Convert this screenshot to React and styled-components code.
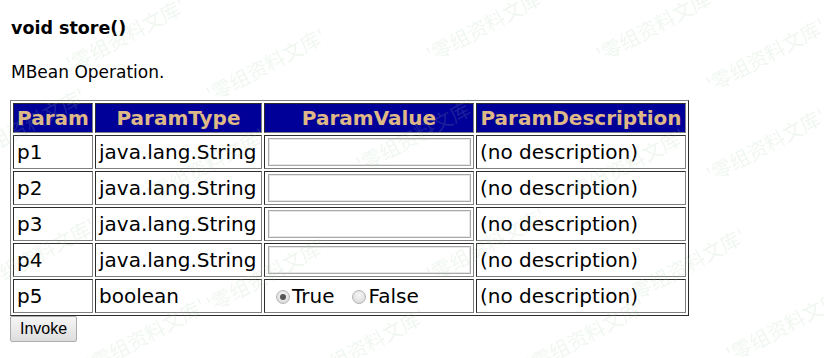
import React from 'react';
import styled, { createGlobalStyle } from 'styled-components';

const GlobalStyle = createGlobalStyle`
  html, body {
    background: #ffffff;
  }
  body {
    margin: 10px;
    font-family: "DejaVu Sans", Verdana, sans-serif;
    color: #000;
  }
`;

const Title = styled.div`
  font-size: 17.5px;
  font-weight: bold;
  line-height: 20px;
  margin: 8px 0 0 1px;
`;

const Lead = styled.p`
  font-size: 17px;
  line-height: 20px;
  margin: 24px 0 18px 1px;
`;

const Table = styled.table`
  border: 1px outset #808080;
  border-spacing: 2px;
  font-size: 20px;
`;

const Head = styled.th`
  background: #000099;
  color: #deb887;
  font-weight: bold;
  padding: 2px;
  border: 1px inset #808080;
  white-space: nowrap;
  width: ${p => p.w}px;
`;

const Cell = styled.td`
  padding: 2px 3px;
  border: 1px inset #808080;
  white-space: nowrap;
  height: 28px;
`;

const InputCell = styled(Cell)`
  padding: 2px 2px 2px 3px;
`;

const TextInput = styled.input`
  box-sizing: border-box;
  width: 203px;
  height: 28px;
  margin: 0;
  padding: 1px 2px;
  border: 1px solid #a9a9a9;
  box-shadow: inset 0 0 0 1px #e6e6e6;
  font: 20px "DejaVu Sans", Verdana, sans-serif;
  display: block;
`;

const Choice = styled.label`
  display: inline-flex;
  align-items: center;
  margin-right: 10px;
`;

const Radio = styled.input`
  appearance: none;
  width: 14px;
  height: 14px;
  margin: 2px 2px 0 8px;
  border-radius: 50%;
  border: 1px solid #b4b4b4;
  background: radial-gradient(circle at 50% 35%, #f6f6f6, #d4d4d4);
  position: relative;

  &:checked::after {
    content: '';
    position: absolute;
    left: 3px;
    top: 3px;
    width: 6px;
    height: 6px;
    border-radius: 50%;
    background: #555;
  }
`;

const Button = styled.button`
  margin: 0;
  padding: 2px 9px;
  height: 26px;
  font: 16px "Liberation Sans", Arial, sans-serif;
  color: #000;
  background: linear-gradient(#f6f6f6, #dddddd);
  border: 1px solid #acacac;
  border-radius: 2px;
`;

const Overlay = styled.div`
  position: fixed;
  inset: 0;
  overflow: hidden;
  pointer-events: none;
`;

const Watermark = styled.span`
  position: absolute;
  left: ${p => p.x}px;
  top: ${p => p.y}px;
  font: 20px "Noto Sans CJK SC", sans-serif;
  color: rgba(160, 200, 160, 0.16);
  transform: rotate(-28deg);
  white-space: nowrap;
`;

const params = ['p1', 'p2', 'p3', 'p4'];

const marks = [
  [60, 20], [200, 50], [420, 10], [590, 10], [700, 40],
  [-40, 110], [140, 150], [350, 120], [560, 150], [700, 130],
  [-30, 240], [200, 260], [420, 230], [620, 250],
  [80, 320], [300, 330], [520, 320], [720, 310],
];

export default function App() {
  return (
    <>
      <GlobalStyle />
      <Title>void store()</Title>
      <Lead>MBean Operation.</Lead>
      <Table>
        <thead>
          <tr>
            <Head w={74}>Param</Head>
            <Head w={161}>ParamType</Head>
            <Head w={203}>ParamValue</Head>
            <Head w={204}>ParamDescription</Head>
          </tr>
        </thead>
        <tbody>
          {params.map(p => (
            <tr key={p}>
              <Cell>{p}</Cell>
              <Cell>java.lang.String</Cell>
              <InputCell><TextInput type="text" /></InputCell>
              <Cell>(no description)</Cell>
            </tr>
          ))}
          <tr>
            <Cell>p5</Cell>
            <Cell>boolean</Cell>
            <InputCell>
              <Choice><Radio type="radio" name="p5" defaultChecked />True</Choice>
              <Choice><Radio type="radio" name="p5" />False</Choice>
            </InputCell>
            <Cell>(no description)</Cell>
          </tr>
        </tbody>
      </Table>
      <Button>Invoke</Button>
      <Overlay>
        {marks.map(([x, y], i) => (
          <Watermark key={i} x={x} y={y}>'零组资料文库'</Watermark>
        ))}
      </Overlay>
    </>
  );
}
